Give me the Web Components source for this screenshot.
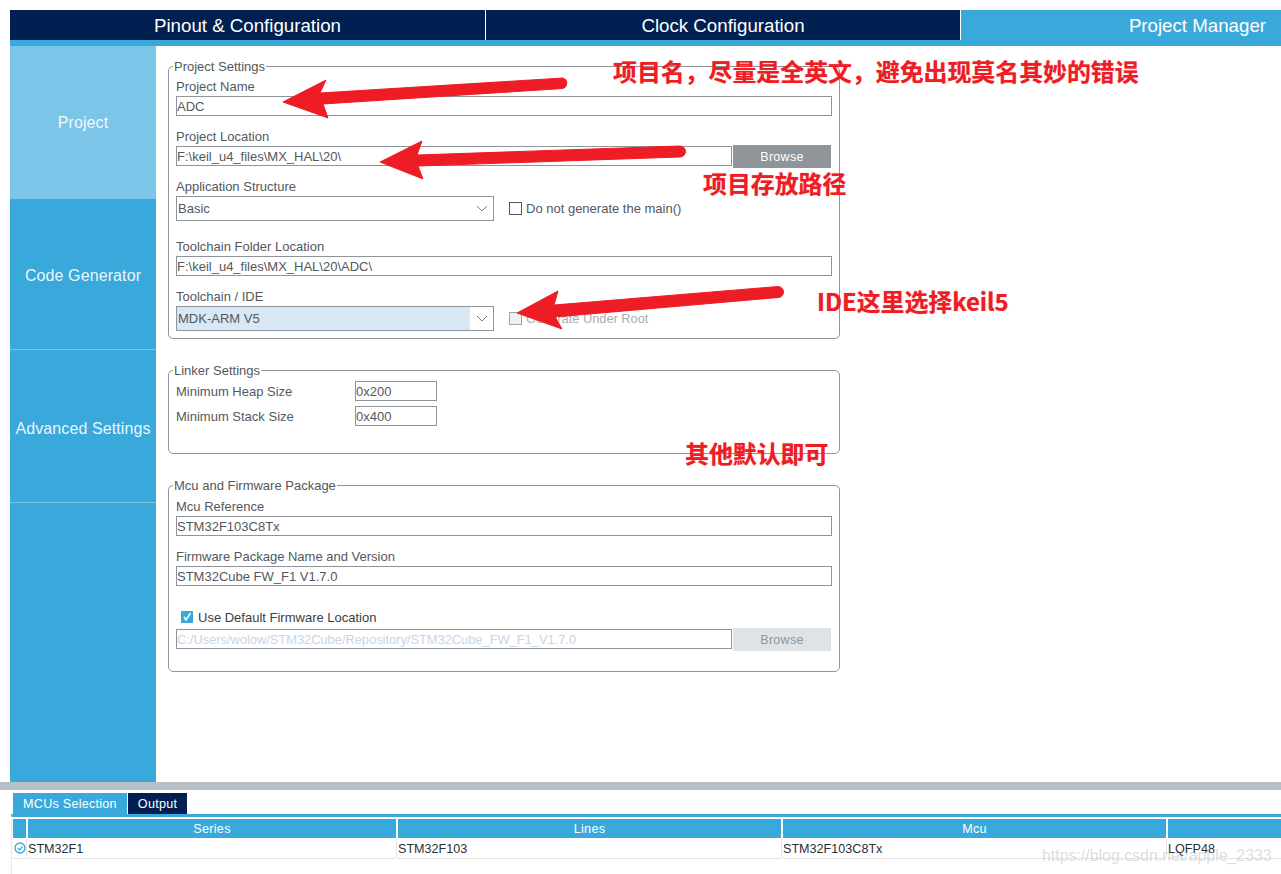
<!DOCTYPE html>
<html>
<head>
<meta charset="utf-8">
<title>Project Manager</title>
<style>
  html, body {
    margin: 0;
    padding: 0;
    height: 874px;
    overflow: hidden;
    background: #fff;
    font-family: "Liberation Sans", Arial, sans-serif;
    font-size: 13px;
    color: #54585c;
  }
</style>
</head>
<body>
<st-app>
  <st-tabbar slot="tabs">
    <st-tab style="width:475px">Pinout &amp; Configuration</st-tab>
    <st-tab style="width:474px">Clock Configuration</st-tab>
    <st-tab active style="width:320px">Project Manager</st-tab>
  </st-tabbar>

  <st-sidebar slot="side">
    <st-side-item active style="height:153px">Project</st-side-item>
    <st-side-item line style="height:151px;padding-top:4px">Code Generator</st-side-item>
    <st-side-item line style="height:153px;padding-top:6px">Advanced Settings</st-side-item>
  </st-sidebar>

  <div slot="main">
    <st-group legend="Project Settings" style="height:273px">
      <st-field label="Project Name"><st-input>ADC</st-input></st-field>
      <st-field label="Project Location" gap="10">
        <st-input style="width:556px">F:\keil_u4_files\MX_HAL\20\</st-input>
        <st-button>Browse</st-button>
      </st-field>
      <st-field label="Application Structure" gap="10">
        <st-select>Basic</st-select>
        <st-check>Do not generate the main()</st-check>
      </st-field>
      <st-field label="Toolchain Folder Location" gap="15"><st-input>F:\keil_u4_files\MX_HAL\20\ADC\</st-input></st-field>
      <st-field label="Toolchain / IDE" gap="10">
        <st-select selected>MDK-ARM V5</st-select>
        <st-check disabled>Generate Under Root</st-check>
      </st-field>
    </st-group>

    <st-group legend="Linker Settings" style="height:84px;margin-top:31px;padding-top:10px">
      <st-size-row label="Minimum Heap Size">0x200</st-size-row>
      <st-size-row label="Minimum Stack Size" style="margin-top:5px">0x400</st-size-row>
    </st-group>

    <st-group legend="Mcu and Firmware Package" style="height:187px;margin-top:31px;padding-top:10px">
      <st-field label="Mcu Reference"><st-input>STM32F103C8Tx</st-input></st-field>
      <st-field label="Firmware Package Name and Version" gap="10"><st-input>STM32Cube FW_F1 V1.7.0</st-input></st-field>
      <st-check checked style="margin:21px 0 2px 5px;height:20px">Use Default Firmware Location</st-check>
      <st-field>
        <st-input disabled style="width:556px">C:/Users/wolow/STM32Cube/Repository/STM32Cube_FW_F1_V1.7.0</st-input>
        <st-button disabled>Browse</st-button>
      </st-field>
    </st-group>
  </div>

  <st-bottom-panel slot="bottom"></st-bottom-panel>
  <st-annotations slot="over"></st-annotations>
</st-app>

<script>
class StApp extends HTMLElement {
  constructor() {
    super();
    this.attachShadow({ mode: "open" });
    this.shadowRoot.innerHTML = `
    <style>
      :host { display: block; position: relative; height: 874px; padding-top: 10px; box-sizing: border-box; }
      .top { padding-left: 10px; }
      .middle { display: grid; grid-template-columns: 146px 1fr; height: 736px; margin-left: 10px; }
      .main { padding: 20px 0 0 12px; }
    </style>
    <div class="top"><slot name="tabs"></slot></div>
    <div class="middle">
      <slot name="side"></slot>
      <div class="main"><slot name="main"></slot></div>
    </div>
    <slot name="bottom"></slot>
    <slot name="over"></slot>
    `;
  }
}

class StTabbar extends HTMLElement {
  constructor() {
    super();
    this.attachShadow({ mode: "open" });
    this.shadowRoot.innerHTML = `
    <style>
      :host { display: flex; gap: 1px; background: #fff; border-bottom: 6px solid #39a9dc; height: 30px; }
    </style>
    <slot></slot>
    `;
  }
}

class StTab extends HTMLElement {
  constructor() {
    super();
    this.attachShadow({ mode: "open" });
    this.shadowRoot.innerHTML = `
    <style>
      :host {
        display: flex; align-items: center; justify-content: center;
        background: #002052; color: #fff; font-size: 18.700px; box-sizing: border-box; padding-top: 1px;
      }
      :host([active]) { background: #39a9dc; justify-content: flex-end; padding-right: 15px; }
    </style>
    <slot></slot>
    `;
  }
}

class StSidebar extends HTMLElement {
  constructor() {
    super();
    this.attachShadow({ mode: "open" });
    this.shadowRoot.innerHTML = `
    <style>
      :host { display: block; background: #39a9dc; }
    </style>
    <slot></slot>
    `;
  }
}

class StSideItem extends HTMLElement {
  constructor() {
    super();
    this.attachShadow({ mode: "open" });
    this.shadowRoot.innerHTML = `
    <style>
      :host {
        display: flex; align-items: center; justify-content: center; box-sizing: border-box;
        color: rgba(255, 255, 255, .92); font-size: 16px; letter-spacing: .1px; white-space: nowrap;
      }
      :host([active]) { background: #7bc5e8; }
      :host([line]) { border-bottom: 1px solid #7bc5e8; }
    </style>
    <slot></slot>
    `;
  }
}

class StGroup extends HTMLElement {
  constructor() {
    super();
    this.attachShadow({ mode: "open" });
    this.shadowRoot.innerHTML = `
    <style>
      :host {
        display: block; position: relative; width: 672px; box-sizing: border-box;
        border: 1px solid #8e9499; border-radius: 5px; padding: 9px 0 0 7px;
      }
      .legend {
        position: absolute; top: -9px; left: 4px; padding: 0 1px;
        background: #fff; line-height: 18px; white-space: nowrap;
      }
    </style>
    <div class="legend"></div>
    <slot></slot>
    `;
  }
  connectedCallback() {
    this.shadowRoot.querySelector(".legend").textContent = this.getAttribute("legend");
  }
}

class StField extends HTMLElement {
  constructor() {
    super();
    this.attachShadow({ mode: "open" });
    this.shadowRoot.innerHTML = `
    <style>
      :host { display: block; width: 656px; }
      .label { height: 20px; line-height: 22px; white-space: nowrap; }
      .row { display: flex; align-items: flex-start; }
    </style>
    <div class="label"></div>
    <div class="row"><slot></slot></div>
    `;
  }
  connectedCallback() {
    const label = this.shadowRoot.querySelector(".label");
    if (this.hasAttribute("label")) {
      label.textContent = this.getAttribute("label");
    } else {
      label.remove();
    }
    if (this.hasAttribute("gap")) {
      this.style.marginTop = this.getAttribute("gap") + "px";
    }
  }
}

class StInput extends HTMLElement {
  constructor() {
    super();
    this.attachShadow({ mode: "open" });
    this.shadowRoot.innerHTML = `
    <style>
      :host {
        display: block; box-sizing: border-box; width: 656px; height: 20px; flex: none;
        border: 1px solid #8e9499; padding-left: 0; line-height: 20px; white-space: nowrap; overflow: hidden;
      }
      :host([disabled]) { color: #c3d6ea; font-size: 12.850px; }
    </style>
    <slot></slot>
    `;
  }
}

class StSelect extends HTMLElement {
  constructor() {
    super();
    this.attachShadow({ mode: "open" });
    this.shadowRoot.innerHTML = `
    <style>
      :host {
        display: flex; box-sizing: border-box; width: 318px; height: 25px; flex: none;
        border: 1px solid #8e9499; line-height: 24px;
      }
      .value { width: 293px; padding-left: 1px; box-sizing: border-box; }
      :host([selected]) .value { background: #d9e8f5; }
      svg { margin: 8px 0 0 6px; }
    </style>
    <div class="value"><slot></slot></div>
    <svg width="12" height="7" viewBox="0 0 12 7"><path d="M1 1l5 5 5-5" fill="none" stroke="#7a8086" stroke-width="1"/></svg>
    `;
  }
}

class StCheck extends HTMLElement {
  constructor() {
    super();
    this.attachShadow({ mode: "open" });
    this.shadowRoot.innerHTML = `
    <style>
      :host { display: flex; align-items: center; height: 25px; margin-left: 15px; white-space: nowrap; }
      .box {
        width: 13px; height: 13px; box-sizing: border-box; border: 1px solid #54585c;
        margin-right: 4px; display: flex; flex: none;
      }
      :host([disabled]) { color: #a9adb1; font-size: 12.800px; }
      :host([disabled]) .box { background: #eef0f2; border-color: #a0a5aa; }
      :host([checked]) { color: #3a3e42; }
      :host([checked]) .box { background: #39a9dc; border-color: #39a9dc; width: 12px; height: 12px; margin-right: 5px; }
      svg { display: none; }
      :host([checked]) svg { display: block; }
    </style>
    <div class="box"><svg width="10" height="10" viewBox="0 0 10 10"><path d="M2 5l2 3 4.500-7" fill="none" stroke="#fff" stroke-width="1.500"/></svg></div>
    <slot></slot>
    `;
  }
}

class StButton extends HTMLElement {
  constructor() {
    super();
    this.attachShadow({ mode: "open" });
    this.shadowRoot.innerHTML = `
    <style>
      :host {
        display: flex; align-items: center; justify-content: center; flex: none;
        width: 98px; height: 23px; margin: -1px 0 -2px 1px;
        background: #8f959b; color: #fff; font-size: 12.500px; letter-spacing: .3px;
      }
      :host([disabled]) { background: #e0e3e5; color: #8f959b; }
    </style>
    <slot></slot>
    `;
  }
}

class StSizeRow extends HTMLElement {
  constructor() {
    super();
    this.attachShadow({ mode: "open" });
    this.shadowRoot.innerHTML = `
    <style>
      :host { display: flex; align-items: center; height: 20px; }
      .label { width: 179px; line-height: 21px; white-space: nowrap; }
      .value { width: 82px; height: 20px; box-sizing: border-box; border: 1px solid #8e9499; line-height: 20px; }
    </style>
    <div class="label"></div>
    <div class="value"><slot></slot></div>
    `;
  }
  connectedCallback() {
    this.shadowRoot.querySelector(".label").textContent = this.getAttribute("label");
  }
}

class StBottomPanel extends HTMLElement {
  constructor() {
    super();
    this.attachShadow({ mode: "open" });
    this.shadowRoot.innerHTML = `
    <style>
      :host { display: block; border-top: 8px solid #b5c1c7; height: 92px; box-sizing: border-box; font-size: 12.600px; overflow: hidden; }
      .tabs { display: flex; gap: 1px; margin: 3px 0 0 13px; height: 21px; }
      .tabs div { display: flex; align-items: center; justify-content: center; color: #fff; letter-spacing: .25px; }
      .sel { width: 114px; background: #39a9dc; }
      .out { width: 59px; background: #002052; }
      .body { margin-left: 11px; border-top: 3px solid #39a9dc; border-left: 1px solid #e8e8e8; height: 60px; box-sizing: border-box; }
      .grid { display: grid; grid-template-columns: 13px 368px 383px 383px 1fr; column-gap: 2px; margin: 2px 0 0 1px; }
      .head { height: 19px; background: #39a9dc; color: #fff; text-align: center; line-height: 20px; letter-spacing: .3px; }
      .cell { height: 21px; line-height: 22px; color: #2c3034; white-space: nowrap; border-bottom: 1px solid #e4e4e4; box-sizing: border-box; position: relative; }
      .cell + .cell::before { content: ""; position: absolute; left: -2px; top: 0; bottom: 0; width: 1px; background: #e4e4e4; }
      svg { display: block; margin: 4px 0 0 1px; }
    </style>
    <div class="tabs"><div class="sel">MCUs Selection</div><div class="out">Output</div></div>
    <div class="body">
      <div class="grid">
        <div class="head"></div><div class="head">Series</div><div class="head">Lines</div><div class="head">Mcu</div><div class="head"></div>
        <div class="cell"><svg width="12" height="12" viewBox="0 0 12 12"><circle cx="6" cy="6" r="5" fill="none" stroke="#39a9dc" stroke-width="1.400"/><path d="M3.500 6l2 2 3-3.500" fill="none" stroke="#39a9dc" stroke-width="1.200"/></svg></div>
        <div class="cell">STM32F1</div><div class="cell">STM32F103</div><div class="cell">STM32F103C8Tx</div><div class="cell">LQFP48</div>
      </div>
    </div>
    `;
  }
}

class StAnnotations extends HTMLElement {
  constructor() {
    super();
    this.attachShadow({ mode: "open" });
    this.shadowRoot.innerHTML = `
    <style>
      :host { display: block; position: absolute; inset: 0; pointer-events: none; }
      svg { position: absolute; left: 0; top: 0; }
      .note {
        position: absolute; color: #ee1c25; font: 700 23.900px/30px "Noto Sans CJK SC", "Liberation Sans", sans-serif;
        white-space: nowrap; text-shadow: 0 0 1px rgba(238, 28, 37, .6);
      }
      .mark {
        position: absolute; left: 1042px; top: 846px; font-size: 15.900px; line-height: 20px;
        color: rgba(170, 170, 170, .4); white-space: nowrap;
      }
    </style>
    <svg width="1281" height="874" viewBox="0 0 1281 874">
      <g fill="#ee1c25" stroke="#ee1c25" stroke-width="1" stroke-linejoin="round">
        <path d="M283 102L326 80 320 93 563 78A5.500 5.500 0 0 1 563 88.500L323 104 328 118z"/>
        <path d="M380 162L422 141 417 155 680 146A5.500 5.500 0 0 1 680 157L418 166 423 179z"/>
        <path d="M517 313L558 291 554 305 778 286.500A5.500 5.500 0 0 1 778 297.500L555 317 562 329z"/>
      </g>
    </svg>
    <div class="note" style="left:613px;top:56px">项目名，尽量是全英文，避免出现莫名其妙的错误</div>
    <div class="note" style="left:703px;top:168px">项目存放路径</div>
    <div class="note" style="left:817px;top:286px">IDE这里选择keil5</div>
    <div class="note" style="left:685px;top:438px">其他默认即可</div>
    <div class="mark">https://blog.csdn.net/apple_2333</div>
    `;
  }
}

customElements.define("st-app", StApp);
customElements.define("st-tabbar", StTabbar);
customElements.define("st-tab", StTab);
customElements.define("st-sidebar", StSidebar);
customElements.define("st-side-item", StSideItem);
customElements.define("st-group", StGroup);
customElements.define("st-field", StField);
customElements.define("st-input", StInput);
customElements.define("st-select", StSelect);
customElements.define("st-check", StCheck);
customElements.define("st-button", StButton);
customElements.define("st-size-row", StSizeRow);
customElements.define("st-bottom-panel", StBottomPanel);
customElements.define("st-annotations", StAnnotations);
</script>
</body>
</html>
